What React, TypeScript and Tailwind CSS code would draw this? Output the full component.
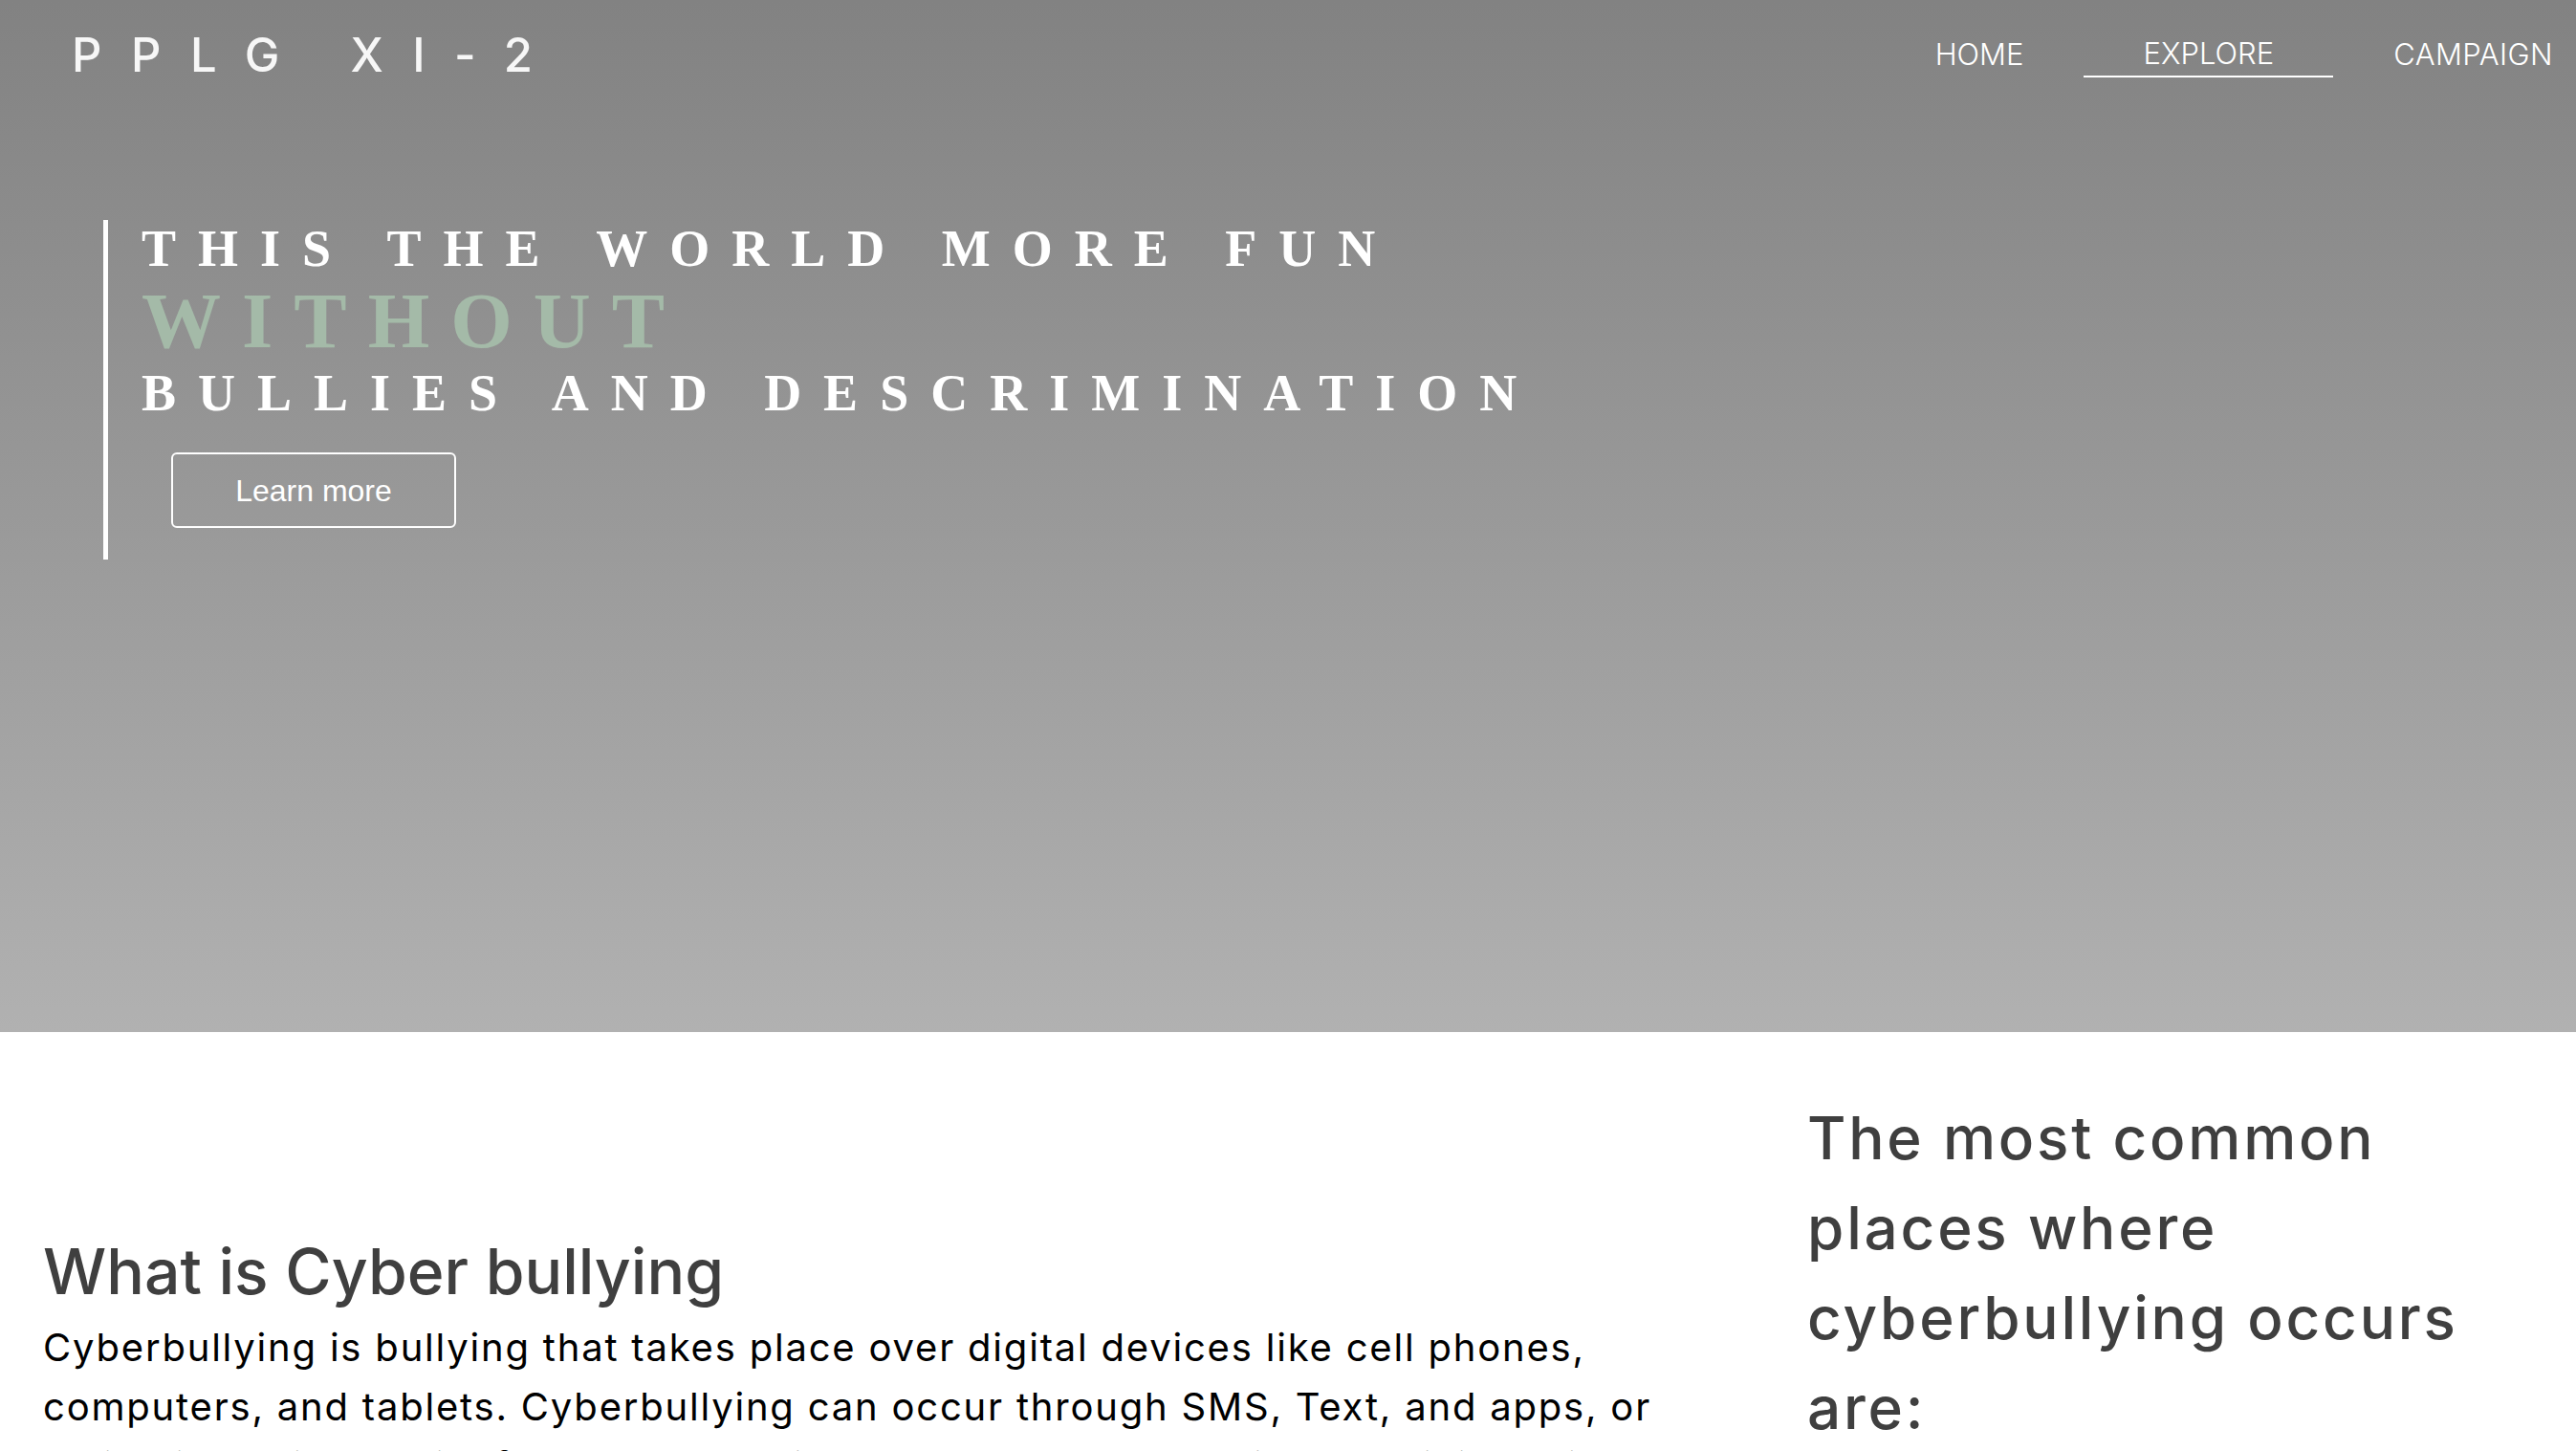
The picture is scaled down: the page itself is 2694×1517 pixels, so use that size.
import React from "react";

const sans = "font-['Inter','Noto_Sans',sans-serif]";
const serif = "font-['Liberation_Serif','Times_New_Roman',serif]";

function Header() {
  return (
    <header className="flex h-[114px] items-center justify-between pl-[75px] pr-[24px]">
      <h1 className={`${sans} text-[49px] font-medium leading-none tracking-[30.5px] text-[#f7f7f7] whitespace-pre`}>
        PPLG XI-2
      </h1>
      <nav className={`${sans} flex items-center text-[31px] font-light text-white`}>
        <a href="#" className="leading-[46px]">HOME</a>
        <a href="#" className="mx-[63px] border-b-2 border-white px-[62px] leading-[46px]">
          EXPLORE
        </a>
        <a href="#" className="leading-[46px] tracking-[0.4px]">CAMPAIGN</a>
      </nav>
    </header>
  );
}

function Hero() {
  return (
    <section className="h-[1079px] bg-gradient-to-b from-[#828282] to-[#b1b1b1]">
      <Header />
      <div className="ml-[108px] mt-[116px] w-fit border-l-[5px] border-white pb-[33px] pl-[35px]">
        <p className={`${serif} text-[54px] font-bold leading-[60px] tracking-[23px] text-white`}>
          THIS THE WORLD MORE FUN
        </p>
        <p className={`${serif} text-[83px] font-bold leading-[90px] tracking-[22px] text-[#a4baa8]`}>
          WITHOUT
        </p>
        <p className={`${serif} text-[54px] font-bold leading-[62px] tracking-[23px] text-white`}>
          BULLIES AND DESCRIMINATION
        </p>
        <button className="ml-[31px] mt-[31px] flex h-[79px] w-[298px] items-center justify-center rounded-[6px] border-2 border-white font-['Liberation_Sans',Arial,sans-serif] text-[32px] text-white">
          Learn more
        </button>
      </div>
    </section>
  );
}

function About() {
  return (
    <section className={`${sans} flex bg-white`}>
      <div className="flex-1 pl-[45px] pt-[201px]">
        <h2 className="text-[66px] font-medium leading-[98px] text-[#3f3f3f]">What is Cyber bullying</h2>
        <p className="max-w-[1720px] text-[40px] leading-[62px] tracking-[1.8px] text-black">
          Cyberbullying is bullying that takes place over digital devices like cell phones, computers, and
          tablets. Cyberbullying can occur through SMS, Text, and apps, or online in social media, forums, or
          gaming where people can view, participate in, or share content.
        </p>
      </div>
      <div className="w-[804px] pt-[64px]">
        <h2 className="w-[720px] text-[62px] font-medium leading-[94px] tracking-[2.8px] text-[#3f3f3f]">
          The most common places where cyberbullying occurs are:
        </h2>
      </div>
    </section>
  );
}

export default function App() {
  return (
    <div className="min-h-screen bg-white">
      <Hero />
      <About />
    </div>
  );
}
